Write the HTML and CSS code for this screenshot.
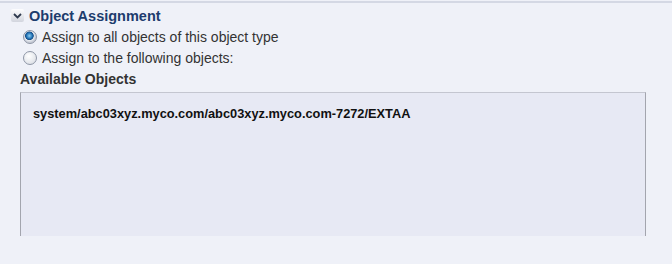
FILE: index.html
```html
<!DOCTYPE html>
<html lang="en">

<head>
    <meta charset="UTF-8">
    <meta name="viewport"
          content="width=device-width, initial-scale=1.0">
    <title>Object Assignment</title>
    <link rel="stylesheet" href="styles.css">
</head>

<body>
    <div id="panel">
        <div class="header">
            <span class="toggle">
                <svg width="13" height="13" viewBox="0 0 13 13">
                    <path d="M3 5 L6.5 8.5 L10 5" fill="none" stroke="#2f3a4e" stroke-width="1.8"/>
                </svg>
            </span>
            <span class="title">Object Assignment</span>
        </div>
        <div class="options">
            <label class="option">
                <span class="radio checked"></span>
                <span>Assign to all objects of this object type</span>
            </label>
            <label class="option">
                <span class="radio"></span>
                <span>Assign to the following objects:</span>
            </label>
        </div>
        <div class="section-label">Available Objects</div>
        <div class="object-list">
            <div class="object-item">system/abc03xyz.myco.com/abc03xyz.myco.com-7272/EXTAA</div>
        </div>
    </div>
</body>

</html>
```

FILE: styles.css
```css
body {
    margin: 0;
    padding: 0;
    width: 672px;
    height: 264px;
    overflow: hidden;
    background-color: #eff1f8;
    font-family: "Liberation Sans", Arial, sans-serif;
    color: #333333;
}

#panel {
    border-top: 2px solid #d4d8e4;
    margin-top: 1px;
    padding: 5px 26px 0 20px;
}

.header {
    display: flex;
    align-items: center;
    gap: 5px;
    margin-left: -9px;
    height: 15px;
}

.toggle {
    display: flex;
    width: 13px;
    height: 13px;
    background: linear-gradient(#fdfdfe, #d2d5de);
    border-radius: 2px;
}

.title {
    font-size: 14.5px;
    font-weight: bold;
    color: #1d3c6d;
}

.options {
    display: flex;
    flex-direction: column;
    gap: 7px;
    margin-top: 7px;
    margin-left: 3px;
}

.option {
    display: flex;
    align-items: center;
    gap: 5px;
    font-size: 14px;
    height: 14px;
}

.radio {
    width: 12px;
    height: 12px;
    border-radius: 50%;
    border: 1px solid #8e96a6;
    background: radial-gradient(circle at 40% 35%, #ffffff, #d4d8e0);
}

.radio.checked {
    background: radial-gradient(circle at 45% 40%, #8fd0f4 0, #1f6fb2 3px, #1a4f86 4px, #e6eaf0 4.6px, #c8ccd6 6.5px);
}

.section-label {
    margin-top: 6px;
    font-size: 14px;
    font-weight: bold;
    color: #333333;
}

.object-list {
    box-sizing: border-box;
    margin-top: 5px;
    height: 144px;
    background-color: #e7e9f4;
    border-top: 1px solid #c4c6d0;
    border-left: 1px solid #a3a5ae;
    border-right: 1px solid #a3a5ae;
    padding: 13px 12px 0;
}

.object-item {
    font-size: 12.8px;
    font-weight: bold;
    color: #111111;
}
```
